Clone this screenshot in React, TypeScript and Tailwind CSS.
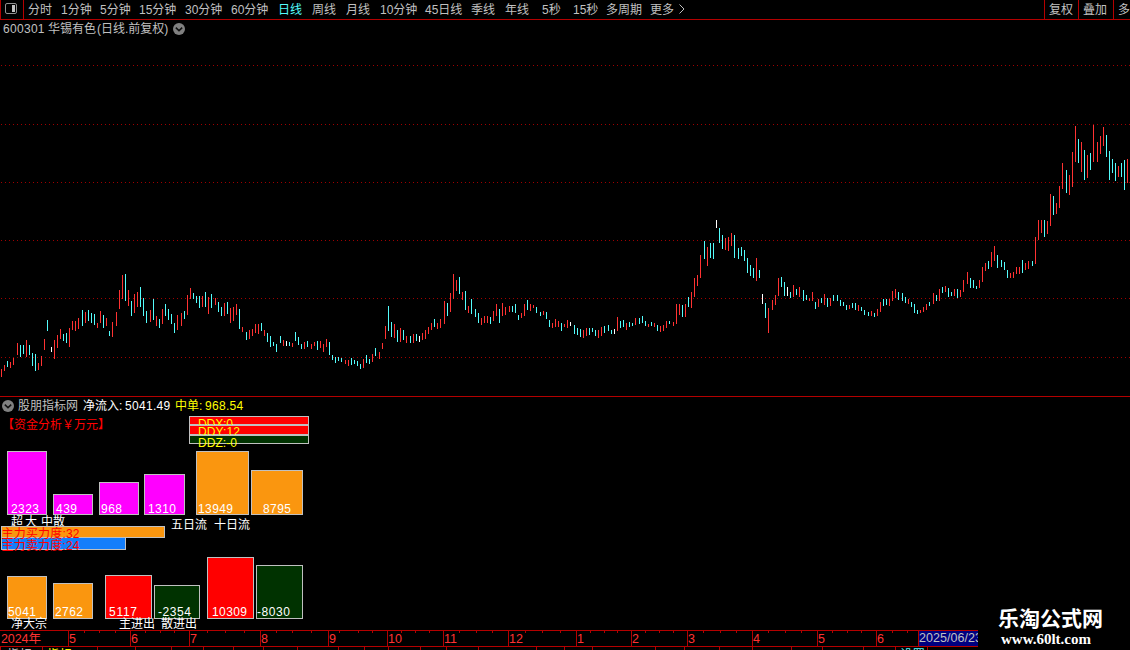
import React from 'react';

type Bar = { x: number; top: number; bottom: number; color: string };

const COLORS: Record<string, string> = { r: '#ff3232', c: '#54fcfc', w: '#ffffff' };

// x,high,low,colour for every trading day
const RAW_BARS = `
1,369,377,r 4,365,371,r 7,361,367,c 10,362,368,r 13,358,365,r 17,343,355,r 20,345,357,c 23,345,354,c 26,340,357,r 29,345,355,c
32,353,366,c 35,354,371,c 38,363,370,r 41,356,366,r 44,339,350,r 47,320,331,c 51,347,352,w 54,340,359,r 57,335,348,r 60,329,339,r
63,334,341,c 66,333,343,c 69,328,347,r 72,321,330,r 75,321,331,r 78,318,329,r 82,310,326,c 85,312,323,r 88,310,321,c 91,313,323,c
94,314,325,c 97,323,328,r 100,311,323,r 103,315,328,c 106,318,326,r 109,331,336,c 112,322,337,r 116,312,326,r 119,290,309,r 122,275,299,r
125,274,301,c 128,290,306,r 131,301,316,c 134,294,313,r 137,292,307,r 140,287,307,c 143,298,316,c 146,311,323,c 150,310,322,r 153,299,320,c
156,316,326,r 159,319,328,c 162,309,324,r 165,304,316,c 168,309,320,c 171,314,324,c 174,323,333,c 177,315,330,r 181,313,326,r 184,311,319,c
187,295,315,r 190,288,299,r 193,293,299,c 196,296,303,c 199,296,308,c 202,296,307,r 205,292,307,c 208,297,314,r 211,294,308,c 215,298,305,r
218,302,312,c 221,307,316,c 224,303,316,r 227,302,314,c 230,308,323,r 233,307,321,r 236,304,315,r 239,309,329,c 242,327,332,r 246,332,340,c
249,330,339,r 252,329,336,r 255,324,333,r 258,324,334,r 261,323,331,c 264,330,336,r 267,333,342,c 270,336,347,c 273,342,346,c 276,344,352,c
280,336,343,c 283,340,346,r 286,341,346,w 289,342,346,c 292,343,347,r 295,332,341,c 298,337,345,c 301,344,349,c 304,342,349,r 307,341,347,c
311,344,349,r 314,342,346,r 317,341,350,c 320,341,348,r 323,344,352,r 326,339,347,r 329,342,355,c 332,355,360,c 335,357,363,c 338,357,361,c
341,358,362,c 345,360,364,r 348,360,366,r 351,358,365,c 354,360,364,c 357,361,366,c 360,364,369,c 363,359,368,r 366,355,363,c 369,359,364,c
372,354,362,r 375,348,356,c 379,352,359,r 382,343,349,r 385,326,339,r 388,306,331,c 391,322,337,c 394,324,338,r 397,330,342,c 400,328,342,r
403,330,340,c 406,336,343,r 410,336,343,c 413,334,343,r 416,334,341,c 419,336,342,w 422,333,340,r 425,330,339,r 428,327,334,r 431,323,330,r
434,319,327,c 437,323,329,r 440,319,328,r 444,301,324,r 447,303,316,c 450,293,312,r 453,274,299,r 456,280,291,r 459,277,294,c 462,292,300,r
465,291,310,c 468,306,313,r 471,299,314,c 475,309,317,c 478,313,323,c 481,318,325,r 484,316,323,r 487,316,323,r 490,317,324,c 493,311,321,r
496,304,316,r 499,309,323,c 502,303,316,r 505,307,315,r 509,306,312,r 512,306,312,c 515,304,313,c 518,315,320,c 521,313,318,r 524,304,316,r
527,300,310,c 530,304,311,r 533,305,308,r 536,307,313,c 540,312,316,c 543,311,315,r 546,312,319,c 549,320,327,c 552,323,328,r 555,319,327,r
558,321,327,r 561,323,331,c 564,324,327,r 567,320,328,r 570,322,326,w 574,325,334,c 577,328,335,c 580,329,337,c 583,330,338,r 586,328,336,r
589,328,335,c 592,328,332,c 595,330,336,c 598,330,338,r 601,327,336,r 604,326,333,c 608,325,331,c 611,330,334,c 614,329,334,w 617,317,331,r
620,321,328,c 623,320,327,c 626,323,330,r 629,322,327,c 632,323,326,c 635,318,325,r 639,318,324,c 642,316,323,c 645,321,326,c 648,324,327,r
651,322,326,c 654,323,327,r 657,325,331,c 660,326,332,r 663,325,331,r 666,321,328,r 669,321,324,c 673,322,326,r 676,304,324,r 679,304,315,r
682,305,317,c 685,304,317,r 688,297,307,c 691,292,308,r 694,278,297,r 697,275,286,r 700,255,278,r 704,241,259,c 707,247,266,r 710,243,258,c
713,243,259,c 716,220,228,w 719,228,243,c 722,235,249,c 725,238,250,r 728,237,251,r 731,233,246,r 734,235,258,c 738,248,259,c 741,247,256,c
744,250,261,c 747,258,273,c 750,265,276,c 753,268,278,c 756,258,281,r 759,270,278,c 762,294,304,w 765,303,318,c 768,308,333,r 772,300,310,r
775,295,305,r 778,278,296,r 781,277,287,c 784,282,296,c 787,287,296,w 790,292,298,c 793,285,297,r 796,289,295,c 799,287,297,r 803,290,301,c
806,295,300,c 809,298,301,r 812,292,301,r 815,302,309,c 818,299,307,r 821,298,303,c 824,294,305,r 827,298,307,c 830,298,306,r 833,295,301,c
837,295,301,c 840,300,306,c 843,302,306,c 846,305,310,c 849,305,309,r 852,303,308,c 855,303,310,c 858,305,311,r 861,307,311,c 864,310,315,c
868,312,316,c 871,311,316,r 874,313,317,c 877,309,316,r 880,302,312,r 883,299,306,c 886,299,305,c 889,299,306,r 892,291,301,r 895,289,298,r
898,292,300,c 902,293,301,c 905,297,303,c 908,299,304,r 911,302,307,c 914,304,313,c 917,310,314,c 920,310,313,r 923,307,312,r 926,304,310,r
929,302,306,c 933,293,304,r 936,295,301,c 939,289,301,r 942,287,293,c 945,286,292,r 948,288,297,c 951,292,296,c 954,289,296,r 957,289,298,c
960,290,297,r 963,280,292,r 967,272,284,r 970,278,288,c 973,280,288,c 976,286,289,c 979,280,288,r 982,267,282,r 985,263,271,r 988,261,269,c
991,252,267,r 994,246,261,r 997,255,268,c 1001,260,267,c 1004,262,270,c 1007,270,278,c 1010,273,278,r 1013,272,278,r 1016,267,274,r
1019,267,274,r 1022,260,273,c 1025,263,270,r 1028,261,269,r 1032,261,266,c 1035,237,264,r 1038,220,240,r 1041,220,233,r 1044,220,237,c
1047,221,234,r 1050,194,226,r 1053,196,215,c 1056,203,214,r 1059,186,208,r 1062,163,189,r 1066,170,193,c 1069,175,195,r 1072,152,187,r
1075,126,162,r 1078,139,163,c 1081,142,172,r 1084,150,180,c 1087,155,178,r 1090,153,170,c 1093,125,162,r 1097,142,162,r 1100,136,154,r
1103,127,146,r 1106,135,157,c 1109,151,180,c 1112,159,173,c 1115,163,181,c 1118,166,177,r 1121,163,177,c 1124,160,190,c 1127,159,183,r`;

const bars: Bar[] = RAW_BARS.trim().split(/\s+/).map(item => {
  const [x, top, bottom, c] = item.split(',');
  return { x: +x, top: +top, bottom: +bottom, color: COLORS[c] };
});

const periods = [
  { name: '分时', w: 'w-[33px]' },
  { name: '1分钟', w: 'w-[39px]' },
  { name: '5分钟', w: 'w-[39px]' },
  { name: '15分钟', w: 'w-[46px]' },
  { name: '30分钟', w: 'w-[46px]' },
  { name: '60分钟', w: 'w-[47px]' },
  { name: '日线', w: 'w-[34px]', active: true },
  { name: '周线', w: 'w-[34px]' },
  { name: '月线', w: 'w-[34px]' },
  { name: '10分钟', w: 'w-[45px]' },
  { name: '45日线', w: 'w-[46px]' },
  { name: '季线', w: 'w-[34px]' },
  { name: '年线', w: 'w-[37px]' },
  { name: '5秒', w: 'w-[31px]' },
  { name: '15秒', w: 'w-[33px]' },
  { name: '多周期', w: 'w-[44px]' },
  { name: '更多', w: 'w-[28px]' },
];

const GRID_LINES = [65, 124, 182, 240, 298, 357];

const months = [
  { x: 68, label: '5' }, { x: 130, label: '6' }, { x: 189, label: '7' }, { x: 260, label: '8' },
  { x: 328, label: '9' }, { x: 387, label: '10' }, { x: 443, label: '11' }, { x: 508, label: '12' },
  { x: 576, label: '1' }, { x: 631, label: '2' }, { x: 687, label: '3' }, { x: 752, label: '4' },
  { x: 817, label: '5' }, { x: 876, label: '6' }, { x: 918, label: '' },
];

const WEEK_TICKS = [
  84, 99, 115, 145, 160, 174, 207, 225, 244, 276, 292, 311, 339, 358, 372, 401, 415, 429, 459, 476, 492,
  525, 542, 560, 590, 604, 617, 645, 659, 673, 703, 720, 736, 768, 785, 801, 832, 847, 861, 892, 907,
];

const TAB_TICKS = [
  0, 42, 97, 135, 171, 203, 233, 263, 297, 338, 364, 388, 420, 446, 478, 536, 564, 592, 655, 684, 719, 752,
  791, 822, 863, 895, 927,
];

const ChevronBadge = () => (
  <svg className="w-3 h-3 shrink-0" viewBox="0 0 12 12">
    <circle cx="6" cy="6" r="6" fill="#808080" />
    <path d="M2.8 4.6L6 7.6L9.2 4.6" stroke="#101010" strokeWidth="1.5" fill="none" />
  </svg>
);

interface BoxProps { x: number; y: number; r: number; b: number; fill: string }

// Framed block given by its outer edges
const Box: React.FC<BoxProps> = ({ x, y, r, b, fill }) => (
  <rect x={x + 0.5} y={y + 0.5} width={r - x - 1} height={b - y - 1} fill={fill} stroke="#c0c0c0" />
);

interface LabelProps { x: number; y: number; len: number; fill?: string; children: string }

const Label: React.FC<LabelProps> = ({ x, y, len, fill = '#ffffff', children }) => (
  <text x={x} y={y} fill={fill} textLength={len} lengthAdjust="spacing">{children}</text>
);

const MAGENTA = '#ff00ff';
const ORANGE = '#fa960f';
const RED = '#ff0000';
const GREEN = '#003200';
const YELLOW = '#ffff00';

const FundPanel = () => (
  <svg className="block text-[12px]" width="330" height="216" viewBox="0 414 330 216">
    <Label x={2} y={429} len={108} fill={RED}>【资金分析￥万元】</Label>

    <Box x={189} y={416} r={309} b={425} fill={RED} />
    <Label x={198} y={428} len={35} fill={YELLOW}>DDX:0</Label>
    <Box x={189} y={425} r={309} b={435} fill={RED} />
    <Label x={198} y={436} len={42} fill={YELLOW}>DDY:12</Label>
    <Box x={189} y={435} r={309} b={444} fill={GREEN} />
    <Label x={198} y={447} len={39} fill={YELLOW}>DDZ:-0</Label>

    <Box x={7} y={451} r={47} b={515} fill={MAGENTA} />
    <Box x={53} y={494} r={93} b={515} fill={MAGENTA} />
    <Box x={99} y={482} r={139} b={515} fill={MAGENTA} />
    <Box x={144} y={474} r={185} b={515} fill={MAGENTA} />
    <Box x={196} y={451} r={249} b={515} fill={ORANGE} />
    <Box x={251} y={470} r={303} b={515} fill={ORANGE} />
    <Label x={11} y={513} len={28}>2323</Label>
    <Label x={56} y={513} len={21}>439</Label>
    <Label x={101} y={513} len={21}>968</Label>
    <Label x={148} y={513} len={28}>1310</Label>
    <Label x={198} y={513} len={35}>13949</Label>
    <Label x={263} y={513} len={28}>8795</Label>
    <Label x={11} y={526} len={12}>超</Label>
    <Label x={25} y={526} len={12}>大</Label>
    <Label x={41} y={526} len={24}>中散</Label>
    <Label x={171} y={529} len={36}>五日流</Label>
    <Label x={214} y={529} len={36}>十日流</Label>

    <Box x={1} y={526} r={165} b={538} fill={ORANGE} />
    <Box x={1} y={537} r={126} b={550} fill="#147efb" />
    <Label x={1.5} y={537.5} len={78} fill={RED}>主力买力度:32</Label>
    <Label x={1.5} y={549.5} len={78} fill={RED}>主力卖力度:24</Label>

    <Box x={7} y={576} r={47} b={619} fill={ORANGE} />
    <Box x={53} y={583} r={93} b={619} fill={ORANGE} />
    <Box x={105} y={575} r={152} b={619} fill={RED} />
    <Box x={154} y={585} r={200} b={619} fill={GREEN} />
    <Box x={207} y={557} r={254} b={619} fill={RED} />
    <Box x={256} y={565} r={303} b={619} fill={GREEN} />
    <Label x={8} y={616} len={28}>5041</Label>
    <Label x={55} y={616} len={28}>2762</Label>
    <Label x={109} y={616} len={28}>5117</Label>
    <Label x={158} y={616} len={33}>-2354</Label>
    <Label x={212} y={616} len={35}>10309</Label>
    <Label x={257} y={616} len={33}>-8030</Label>
    <Label x={11} y={628} len={36}>净大宗</Label>
    <Label x={119} y={628} len={36}>主进出</Label>
    <Label x={161} y={628} len={36}>散进出</Label>
  </svg>
);

const TimeAxis = () => (
  <svg className="block shrink-0 text-[12.5px]" width="978" height="20" viewBox="0 630 978 20" shapeRendering="crispEdges">
    <rect x="0" y="630" width="978" height="1" fill="#b40000" />
    <rect x="0" y="646" width="978" height="1" fill="#b40000" />
    <rect x="919" y="631" width="59" height="15" fill="#000080" />
    {months.map(m => (
      <g key={m.x}>
        <rect x={m.x} y="630" width="1" height="17" fill="#b40000" />
        <text x={m.x + 1} y="643" fill="#ff3232">{m.label}</text>
      </g>
    ))}
    {WEEK_TICKS.map(x => <rect key={x} x={x} y="631" width="1" height="2" fill="#b40000" />)}
    {TAB_TICKS.map(x => <rect key={x} x={x} y="647" width="1" height="3" fill="#b40000" />)}
    <Label x={1} y={643} len={40} fill="#ff3232">2024年</Label>
    <Label x={919} y={642} len={63} fill="#c0c0c0">2025/06/23</Label>
    <text x="7" y="659" fill="#c0c0c0">指标</text>
    <text x="47" y="659" fill={YELLOW}>指标A</text>
    <text x="900" y="659" fill="#54fcfc">设置</text>
  </svg>
);

const App: React.FC = () => {
  return (
    <div className="relative w-[1130px] h-[650px] overflow-hidden bg-black text-[#c0c0c0] text-[12px] leading-[18px] font-['Liberation_Sans','Noto_Sans_CJK_SC',sans-serif] whitespace-nowrap flex flex-col">
      {/* Period toolbar */}
      <div className="flex h-5 shrink-0 border-b border-[#b40000]">
        <div className="w-6 shrink-0 border-l border-r border-[#b40000] pl-1 pt-[3px]">
          <svg className="block w-3 h-3" viewBox="0 0 12 12">
            <rect x="0.5" y="0.5" width="11" height="10" rx="1.5" fill="none" stroke="#909090" />
            <rect x="7" y="2" width="3" height="7" fill="#c0c0c0" />
          </svg>
        </div>
        <div className="flex pl-1 pt-px">
          {periods.map(p => (
            <span key={p.name} className={`${p.w} ${p.active ? 'text-[#54fcfc]' : ''}`}>{p.name}</span>
          ))}
          <svg className="w-2 h-[10px] mt-[3px]" viewBox="0 0 8 10">
            <path d="M1.5 0.5L6 5L1.5 9.5" stroke="#c0c0c0" fill="none" />
          </svg>
        </div>
        <div className="ml-auto flex">
          <span className="w-[34px] pl-1 pt-px border-l border-[#b40000]">复权</span>
          <span className="w-[35px] pl-1 pt-px border-l border-[#b40000]">叠加</span>
          <span className="w-[17px] pl-1 pt-px border-l border-[#b40000] overflow-hidden">多</span>
        </div>
      </div>

      {/* Price chart */}
      <div className="h-[377px] shrink-0 border-b border-[#b40000]">
        <div className="h-[18px] flex items-center pl-[3px]">
          <span className="w-[45px] tracking-[0.3px]">600301</span>
          <span className="w-[49px]">华锡有色</span>
          <span className="w-[76px]">(日线.前复权)</span>
          <ChevronBadge />
        </div>
        <svg className="block" width="1130" height="358" viewBox="0 38 1130 358" shapeRendering="crispEdges">
          {GRID_LINES.map(y => (
            <line key={y} x1="1" x2="1130" y1={y + 0.5} y2={y + 0.5} stroke="#a00000" strokeDasharray="1 3" />
          ))}
          {bars.map(b => (
            <rect key={b.x} x={b.x} y={b.top} width="1" height={b.bottom - b.top} fill={b.color} />
          ))}
        </svg>
      </div>

      {/* Fund flow indicator */}
      <div className="h-[233px] shrink-0">
        <div className="h-[17px] flex items-center pl-[2px]">
          <ChevronBadge />
          <span className="w-[65px] pl-1">股朋指标网</span>
          <span className="w-[46px] pl-1 text-white">净流入:</span>
          <span className="w-[50px] text-white tracking-[0.3px]">5041.49</span>
          <span className="w-[30px] text-[#ffff00]">中单:</span>
          <span className="text-[#ffff00] tracking-[0.3px]">968.54</span>
        </div>
        <FundPanel />
      </div>

      <TimeAxis />

      {/* Site mark */}
      <div className="absolute left-[998px] top-[606px] text-white font-bold">
        <div className="text-[21px] leading-[26px]">乐淘公式网</div>
        <div className="pl-[3px] -mt-px text-[15px] leading-[16px] font-['Liberation_Serif',serif]">www.60lt.com</div>
      </div>
    </div>
  );
};

export default App;
